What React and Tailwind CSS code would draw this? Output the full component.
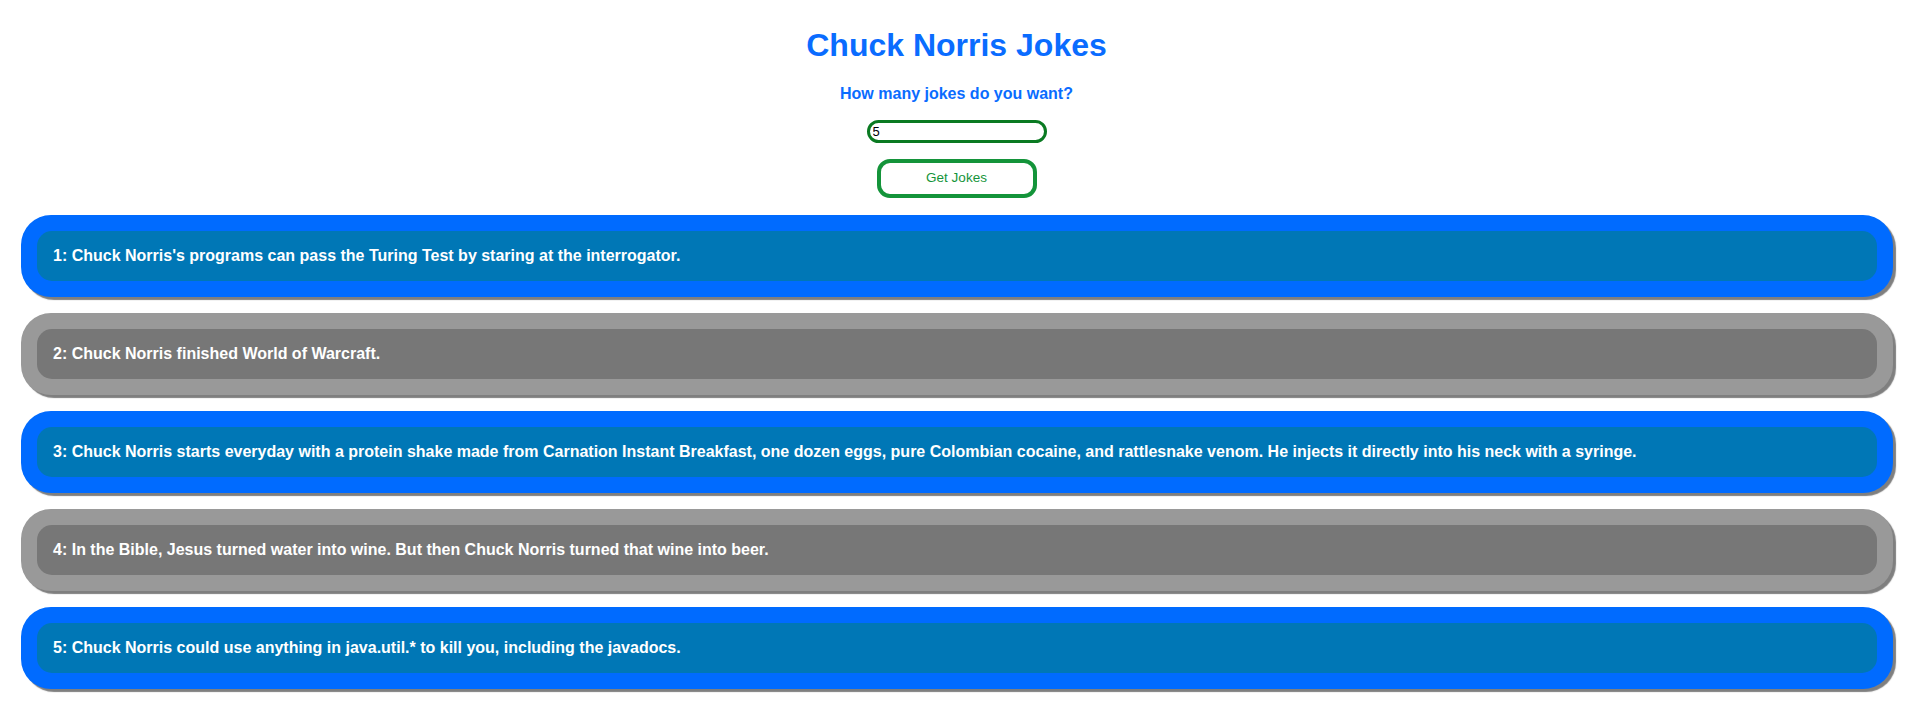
const JOKES = [
  "Chuck Norris's programs can pass the Turing Test by staring at the interrogator.",
  "Chuck Norris finished World of Warcraft.",
  "Chuck Norris starts everyday with a protein shake made from Carnation Instant Breakfast, one dozen eggs, pure Colombian cocaine, and rattlesnake venom. He injects it directly into his neck with a syringe.",
  "In the Bible, Jesus turned water into wine. But then Chuck Norris turned that wine into beer.",
  "Chuck Norris could use anything in java.util.* to kill you, including the javadocs.",
];

function JokeCard({ index, text }) {
  const even = index % 2 === 1;
  return (
    <div
      className={`rounded-[30px] p-4 shadow-[3px_3px_1px_#7f7f7f] ${
        even ? "bg-[#999999]" : "bg-[#006bff]"
      }`}
    >
      <div
        className={`h-[50px] flex items-center px-4 rounded-[15px] text-white font-bold text-[16px] ${
          even ? "bg-[#777777]" : "bg-[#0077b6]"
        }`}
      >
        {index + 1}: {text}
      </div>
    </div>
  );
}

export default function App() {
  return (
    <div className="min-h-screen bg-white font-['Liberation_Sans',Arial,sans-serif] pb-4">
      {/* Header */}
      <div className="flex flex-col items-center">
        <h1 className="mt-[27px] text-[32px] leading-[37px] font-bold text-[#0a6cff]">
          Chuck Norris Jokes
        </h1>
        <p className="mt-[21px] text-[16px] leading-[18px] font-bold text-[#0a6cff]">
          How many jokes do you want?
        </p>
        <input
          type="text"
          defaultValue="5"
          className="mt-[17px] w-[180px] h-[23px] border-[3px] border-[#0a7a22] rounded-[12px] px-[3px] text-[13px] text-black outline-none"
        />
        <button className="mt-4 w-[160px] h-[39px] border-4 border-[#14943a] rounded-[13px] bg-white text-[13.5px] font-medium text-[#14943a]">
          Get Jokes
        </button>
      </div>

      {/* Joke list */}
      <div className="mt-[17px] ml-[21px] mr-[20px] flex flex-col gap-4">
        {JOKES.map((j, i) => (
          <JokeCard key={i} index={i} text={j} />
        ))}
      </div>
    </div>
  );
}
